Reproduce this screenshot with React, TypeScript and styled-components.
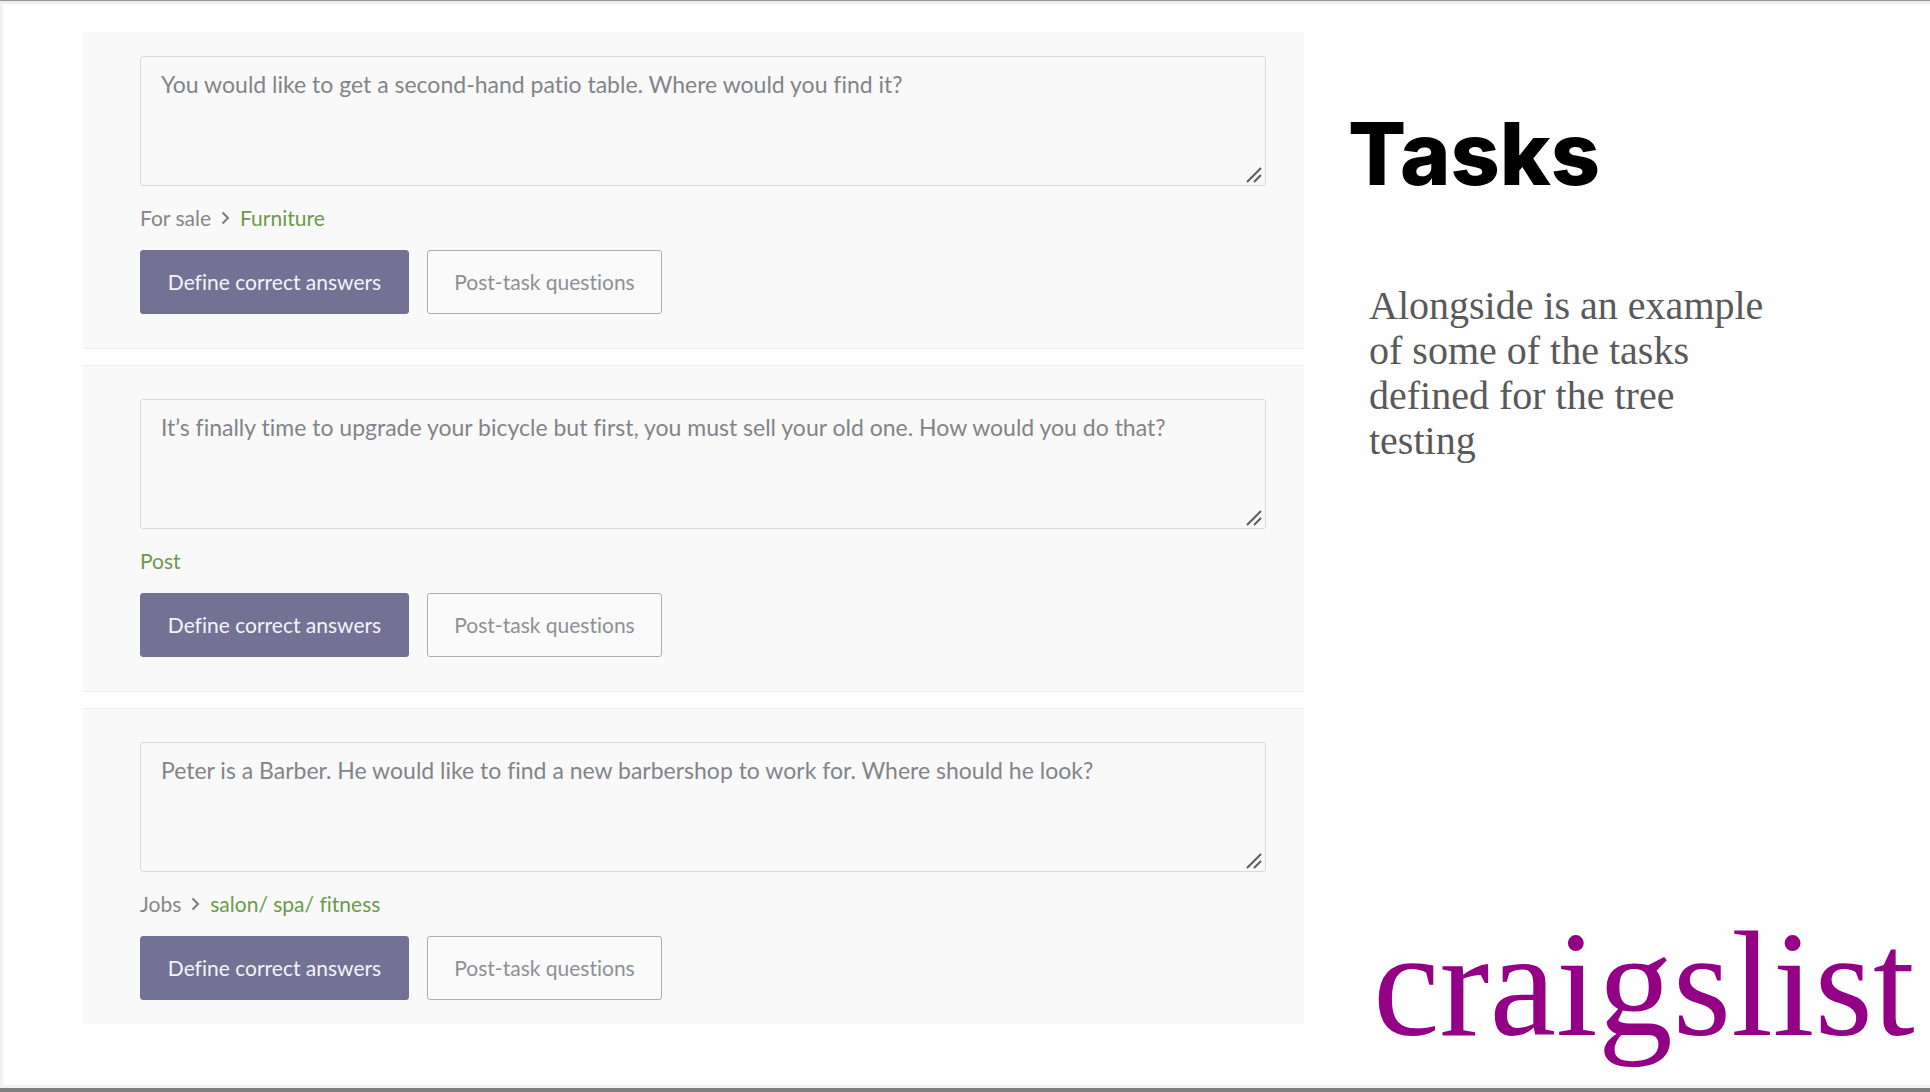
import React from "react";
import styled, { createGlobalStyle } from "styled-components";

const GlobalStyle = createGlobalStyle`
  * { box-sizing: border-box; }
  body { margin: 0; background: #fefefe; }
`;

const sans = `Lato, "Open Sans", sans-serif`;
const serif = `"Liberation Serif", "Times New Roman", serif`;

const Slide = styled.main`
  display: grid;
  grid-template-columns: minmax(0, 1221fr) minmax(0, 626fr);
  min-height: 100vh;
  padding: 0 0 4px 83px;
  background: #fefefe;
  box-shadow: inset 0 1px #979797, inset 0 -4px #7f7f7f, inset 0 4px #efefef,
    inset 0 -7px #f1f1f1, inset 3px 0 #f1f1f1;
`;

const TaskList = styled.section`
  display: flex;
  flex-direction: column;
  gap: 16px;
  padding: 32px 0;
`;

const Card = styled.article`
  padding: 33px 38px 34px 57px;
  background: #f9f9f9;
  border: solid #eeeeee;
  border-width: 1px 0;

  &:first-child { border-top: 0; padding-top: 24px; }
  &:last-child { border-bottom: 0; padding-bottom: 24px; }
`;

const Field = styled.label`
  display: block;
  position: relative;
`;

const TaskText = styled.textarea`
  display: block;
  width: 100%;
  height: 130px;
  padding: 13px 20px;
  resize: none;
  overflow: hidden;
  outline: none;
  background: #f9f9f9;
  border: 1px solid #d9dadb;
  border-radius: 3px;
  color: #828488;
  font: 23px/28px ${sans};
  font-variant-ligatures: none;
`;

const Grip = styled.svg`
  position: absolute;
  right: 4px;
  bottom: 3px;
  pointer-events: none;
`;

const Crumbs = styled.nav`
  display: flex;
  align-items: center;
  gap: 10px;
  margin: 18px 0;
  color: #85878a;
  font: 21px/28px ${sans};
  font-variant-ligatures: none;
`;

const Answer = styled.a`
  color: #6b9a4b;
  text-decoration: none;
`;

const Actions = styled.div`
  display: flex;
  gap: 18px;
`;

const Button = styled.button<{ $primary?: boolean }>`
  width: ${(p) => (p.$primary ? 269 : 235)}px;
  height: 64px;
  padding: 0;
  cursor: pointer;
  border: 1px solid ${(p) => (p.$primary ? "#737294" : "#acaeb2")};
  border-radius: 3px;
  background: ${(p) => (p.$primary ? "#737294" : "#fafafa")};
  color: ${(p) => (p.$primary ? "#f4f4f8" : "#8e9095")};
  font: 21px/28px ${sans};
  font-variant-ligatures: none;
`;

const Aside = styled.aside`
  display: flex;
  flex-direction: column;
  padding: 104px 0 29px 44px;
`;

const Title = styled.h1`
  margin: 0 0 79px;
  color: #000;
  font: 800 86px/100px Inter, sans-serif;
`;

const Note = styled.p`
  max-width: 430px;
  margin: 0;
  padding-left: 21px;
  color: #595959;
  font: 40px/45px ${serif};
`;

const Logo = styled.div`
  margin-top: auto;
  padding-left: 25px;
  color: #930085;
  font: 150px/150px ${serif};
`;

const tasks = [
  {
    text: "You would like to get a second-hand patio table. Where would you find it?",
    parent: "For sale",
    answer: "Furniture",
  },
  {
    text: "It’s finally time to upgrade your bicycle but first, you must sell your old one. How would you do that?",
    answer: "Post",
  },
  {
    text: "Peter is a Barber. He would like to find a new barbershop to work for. Where should he look?",
    parent: "Jobs",
    answer: "salon/ spa/ fitness",
  },
];

function Chevron() {
  return (
    <svg width="9" height="14" viewBox="0 0 9 14" fill="none" stroke="#7b7d80" strokeWidth="2" aria-hidden="true">
      <path d="M1.5 1.5 7 7l-5.500 5.500" />
    </svg>
  );
}

export default function App() {
  return (
    <>
      <GlobalStyle />
      <Slide>
        <TaskList>
          {tasks.map((task) => (
            <Card key={task.answer}>
              <Field>
                <TaskText aria-label="Task" defaultValue={task.text} />
                <Grip width="16" height="16" viewBox="0 0 16 16" stroke="#5c5c5c" strokeWidth="2" aria-hidden="true">
                  <path d="M1 15 15 1M8 15l7-7" />
                </Grip>
              </Field>
              <Crumbs>
                {task.parent && (
                  <>
                    <span>{task.parent}</span>
                    <Chevron />
                  </>
                )}
                <Answer href="#">{task.answer}</Answer>
              </Crumbs>
              <Actions>
                <Button $primary>Define correct answers</Button>
                <Button>Post-task questions</Button>
              </Actions>
            </Card>
          ))}
        </TaskList>
        <Aside>
          <Title>Tasks</Title>
          <Note>Alongside is an example of some of the tasks defined for the tree testing</Note>
          <Logo>craigslist</Logo>
        </Aside>
      </Slide>
    </>
  );
}
